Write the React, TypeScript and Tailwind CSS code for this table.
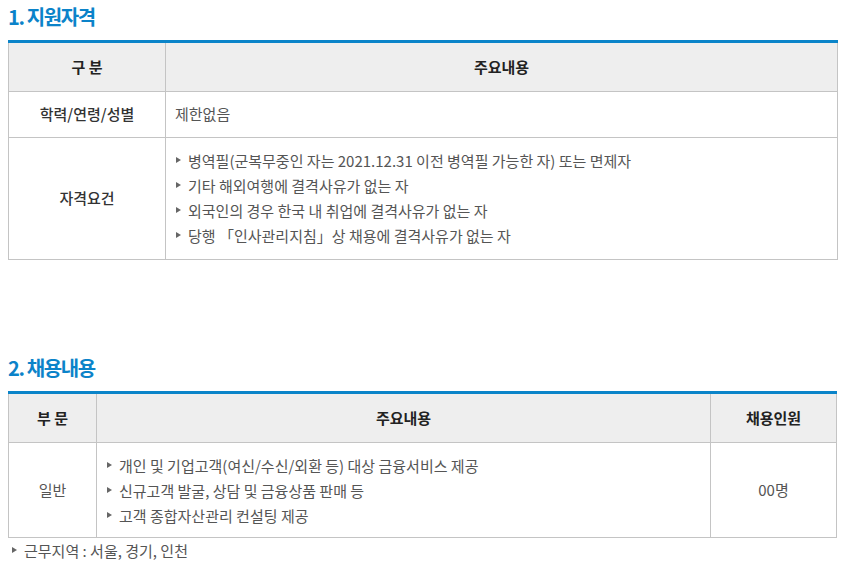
const qualifications = [
  "병역필(군복무중인 자는 2021.12.31 이전 병역필 가능한 자) 또는 면제자",
  "기타 해외여행에 결격사유가 없는 자",
  "외국인의 경우 한국 내 취업에 결격사유가 없는 자",
  "당행 「인사관리지침」상 채용에 결격사유가 없는 자",
];

const duties = [
  "개인 및 기업고객(여신/수신/외환 등) 대상 금융서비스 제공",
  "신규고객 발굴, 상담 및 금융상품 판매 등",
  "고객 종합자산관리 컨설팅 제공",
];

function Bullet() {
  return (
    <span className="mr-[7px] inline-block h-0 w-0 translate-y-[-1px] border-y-[3px] border-l-[5px] border-y-transparent border-l-[#666]" />
  );
}

function BulletList({ items }: { items: string[] }) {
  return (
    <ul>
      {items.map((item) => (
        <li key={item} className="flex items-center leading-[25px]">
          <Bullet />
          <span>{item}</span>
        </li>
      ))}
    </ul>
  );
}

function SectionTitle({ children }: { children: string }) {
  return (
    <h2 className="px-2 text-[20px] font-bold leading-[28px] tracking-[-1.4px] text-[#0b83c9]">
      {children}
    </h2>
  );
}

export default function App() {
  return (
    <div
      className="min-h-screen bg-white pt-[3px] text-[15px] text-[#555]"
      style={{ fontFamily: '"Noto Sans CJK KR", "Noto Sans", sans-serif' }}
    >
      <SectionTitle>1. 지원자격</SectionTitle>
      <table className="mx-2 mt-[9px] w-[830px] border-collapse border-t-[3px] border-t-[#0a84c9]">
        <thead>
          <tr className="h-[50px] bg-[#eeeeee] text-[#222]">
            <th className="w-[157px] border border-t-0 border-[#c4c4c4] font-bold">구 분</th>
            <th className="border border-t-0 border-[#c4c4c4] font-bold">주요내용</th>
          </tr>
        </thead>
        <tbody>
          <tr className="h-[46px]">
            <td className="border border-[#c4c4c4] text-center font-medium text-[#333]">학력/연령/성별</td>
            <td className="border border-[#c4c4c4] px-[9px]">제한없음</td>
          </tr>
          <tr>
            <td className="border border-[#c4c4c4] text-center font-medium text-[#333]">자격요건</td>
            <td className="border border-[#c4c4c4] pt-[10px] pb-[11px] pl-[10px]">
              <BulletList items={qualifications} />
            </td>
          </tr>
        </tbody>
      </table>

      <div className="mt-[94px]">
        <SectionTitle>2. 채용내용</SectionTitle>
      </div>
      <table className="mx-2 mt-[9px] w-[829px] border-collapse border-t-[3px] border-t-[#0a84c9]">
        <thead>
          <tr className="h-[50px] bg-[#eeeeee] text-[#222]">
            <th className="w-[88px] border border-t-0 border-[#c4c4c4] font-bold">부 문</th>
            <th className="border border-t-0 border-[#c4c4c4] font-bold">주요내용</th>
            <th className="w-[126px] border border-t-0 border-[#c4c4c4] font-bold">채용인원</th>
          </tr>
        </thead>
        <tbody>
          <tr>
            <td className="border border-[#c4c4c4] text-center">일반</td>
            <td className="border border-[#c4c4c4] pt-[10px] pb-[9px] pl-[10px]">
              <BulletList items={duties} />
            </td>
            <td className="border border-[#c4c4c4] text-center">00명</td>
          </tr>
        </tbody>
      </table>
      <p className="flex items-center pl-[12px] leading-[25px]">
        <Bullet />
        <span>근무지역 : 서울, 경기, 인천</span>
      </p>
    </div>
  );
}
